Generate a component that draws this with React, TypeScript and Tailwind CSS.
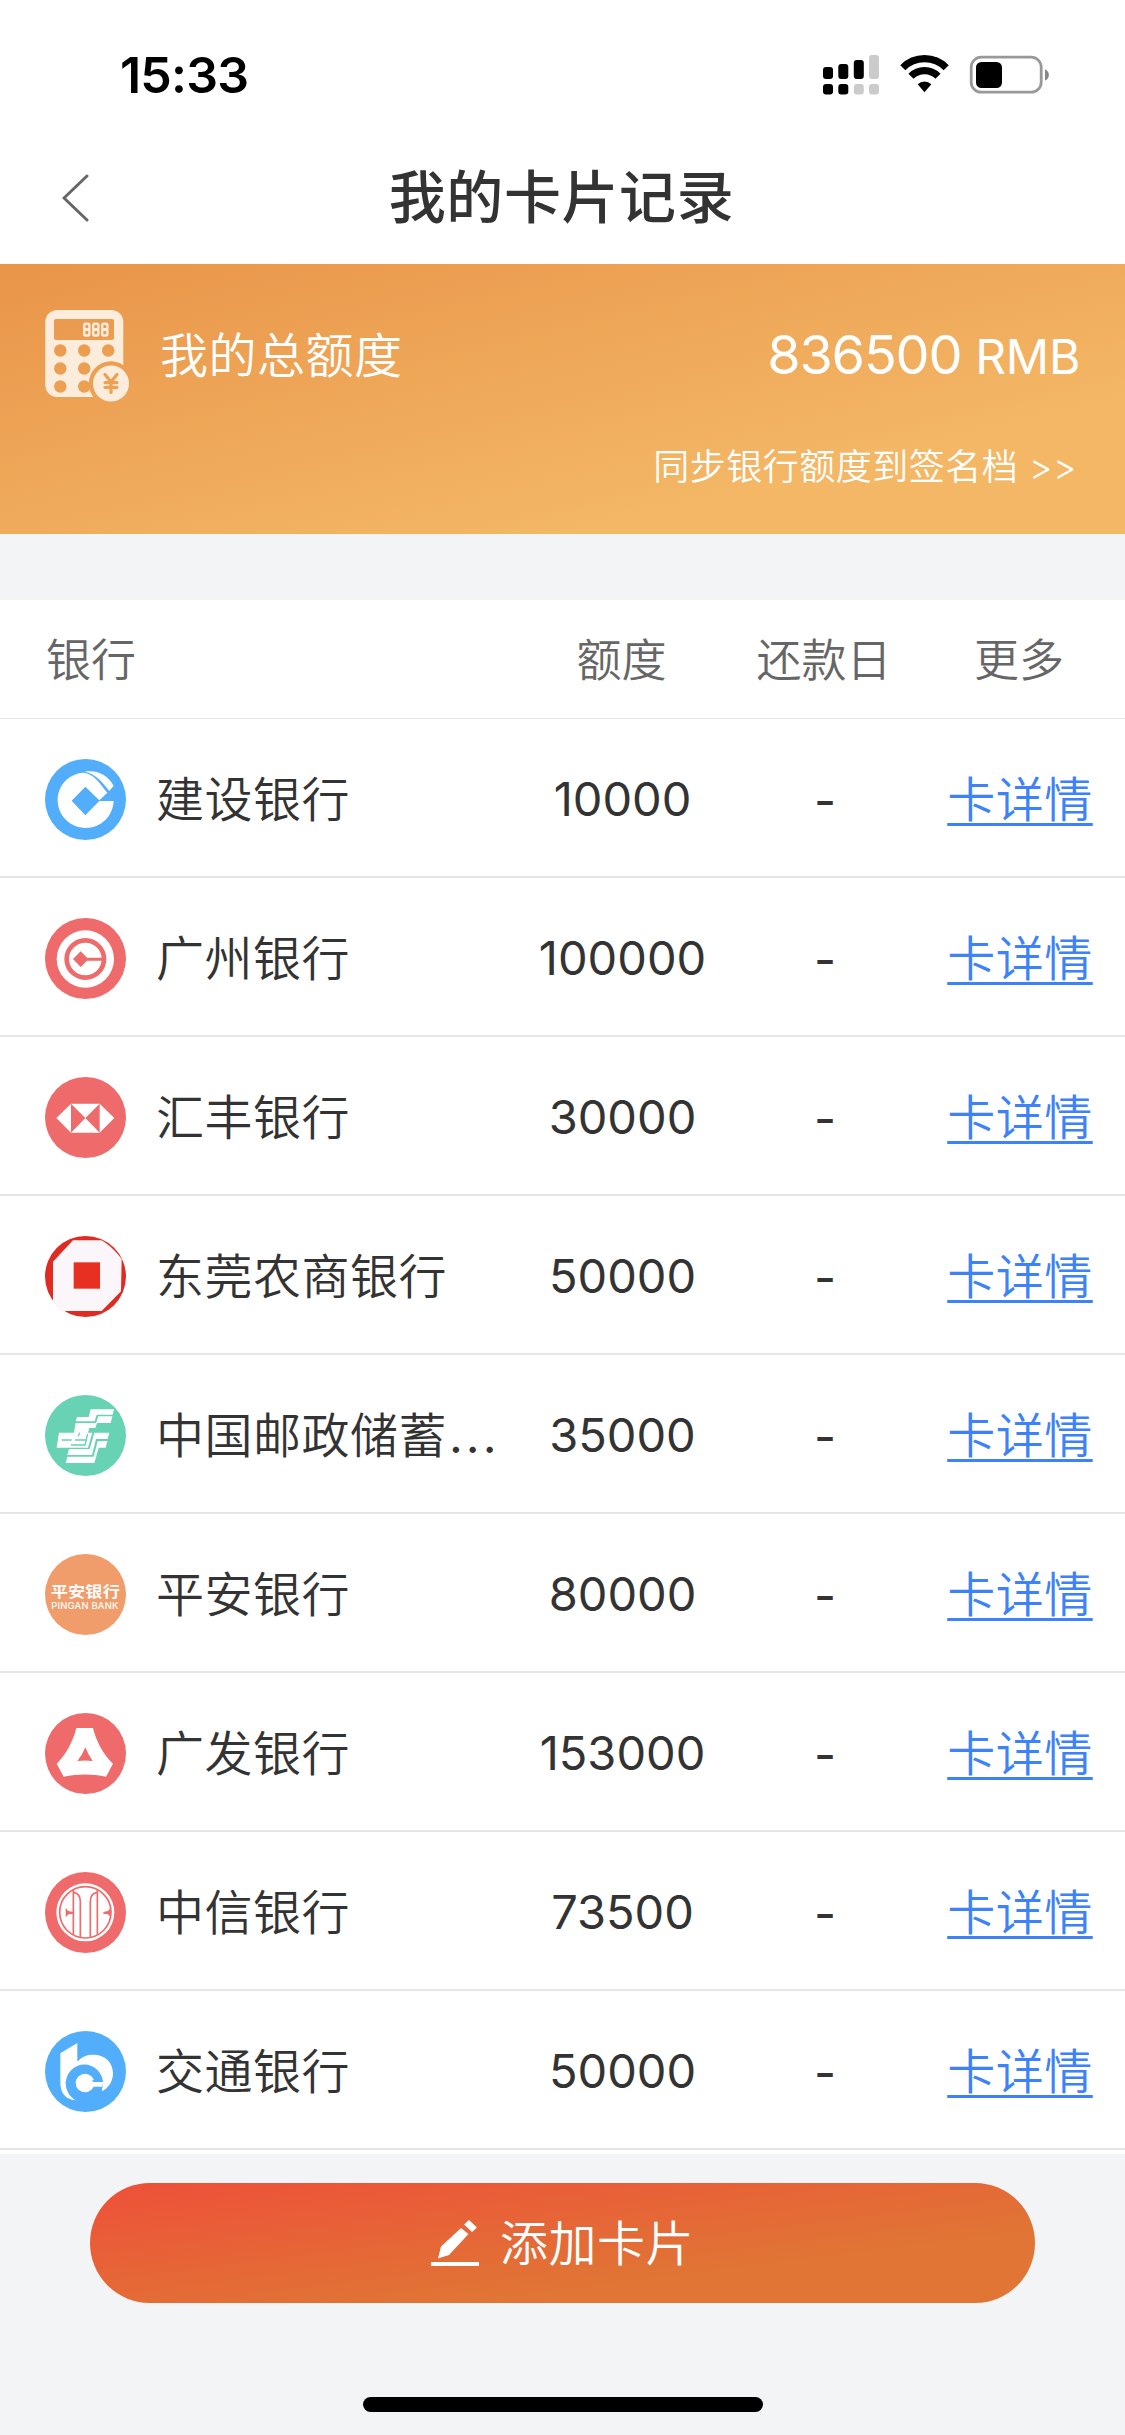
import type { ReactNode } from "react";

const WHITE = "#ffffff";
const RED = "#ee6a6b";
const BLUE = "#52adfb";

function Logo({ color, children }: { color: string; children: ReactNode }) {
  return (
    <svg viewBox="0 0 243 243" className="mt-[3px] size-[81px] shrink-0">
      <circle cx="121.5" cy="121.5" r="121.5" fill={color} />
      {children}
    </svg>
  );
}

function ConstructionBank() {
  return (
    <Logo color={BLUE}>
      <path
        fill={WHITE}
        d="M115 41C70 44 38 80 38 124C38 170 76 207 122 207C168 207 204 171 206 126H163L121 169L80 125L121 83L163 124L187 101C170 82 150 44 115 41Z"
      />
      <path fill={WHITE} d="M119 38C155 33 187 46 206 80L193 96C176 74 152 43 119 38Z" />
    </Logo>
  );
}

function GuangzhouBank() {
  return (
    <Logo color={RED}>
      <circle cx="121" cy="123" r="86" fill={WHITE} />
      <circle cx="121" cy="123" r="56" fill="none" stroke={RED} strokeWidth="14" />
      <path fill={RED} d="M84 123L107 100L126 119H172V128H126L107 147Z" />
    </Logo>
  );
}

function Hsbc() {
  return (
    <Logo color={RED}>
      <path fill={WHITE} d="M34 123L78 80H164L208 123L164 167H78Z" />
      <path fill={RED} d="M78 80L121 123L78 167ZM164 80L121 123L164 167Z" />
    </Logo>
  );
}

function DongguanBank() {
  return (
    <svg viewBox="0 0 243 243" className="mt-[3px] size-[81px] shrink-0">
      <clipPath id="dg">
        <circle cx="121.5" cy="121.5" r="121.5" />
      </clipPath>
      <g clipPath="url(#dg)">
        <rect width="243" height="243" fill="#df2b22" />
        <path fill="#faf6f9" d="M84 13H169C190 24 214 46 230 70L228 166L170 225H56L0 243L24 192V77Z" />
        <path fill={WHITE} d="M24 192L60 225V243H0V192Z" />
        <rect x="86" y="79" width="79" height="79" fill="#e83022" />
      </g>
    </svg>
  );
}

function PostalBank() {
  return (
    <Logo color="#68d2b4">
      <g fill={WHITE}>
        <path d="M137 43H207L203 59H155L149 79H92L96 66H131Z" />
        <path d="M160 64H202L197 84H156L151 99H133L128 117H86L92 84H153Z" />
        <path d="M42 113H142L129 158H35Z" />
        <path d="M148 113H193L188 132H153L141 180H67L72 162H134Z" />
        <path d="M158 138H187L182 158H161L148 204H62L67 185H146Z" />
      </g>
      <path
        d="M50 135H80M90 135H126M128 117L120 150H78M104 113L100 124"
        fill="none"
        stroke="#68d2b4"
        strokeWidth="4"
      />
    </Logo>
  );
}

function PingAnBank() {
  return (
    <Logo color="#f09c6b">
      <text
        x="121"
        y="130"
        fill={WHITE}
        fontSize="44"
        fontWeight="700"
        textAnchor="middle"
        textLength="208"
        lengthAdjust="spacingAndGlyphs"
        fontFamily="'Noto Sans CJK SC', sans-serif"
      >
        平安银行
      </text>
      <text
        x="120"
        y="164"
        fill={WHITE}
        fontSize="26"
        fontWeight="500"
        textAnchor="middle"
        textLength="202"
        lengthAdjust="spacingAndGlyphs"
        fontFamily="Inter, sans-serif"
      >
        PINGAN BANK
      </text>
    </Logo>
  );
}

function GuangfaBank() {
  return (
    <Logo color={RED}>
      <path
        fill={WHITE}
        d="M94 45H144C154 84 174 124 204 152L183 191C142 182 100 182 56 191L35 152C64 124 84 84 94 45Z"
      />
      <path fill={RED} d="M121 103Q129 124 143 144Q121 141 97 144Q112 126 121 103Z" />
    </Logo>
  );
}

function CiticBank() {
  return (
    <Logo color={RED}>
      <circle cx="121" cy="121" r="87" fill={WHITE} />
      <circle cx="121" cy="121" r="77" fill="none" stroke={RED} strokeWidth="5" />
      <g fill="none" stroke={RED} strokeWidth="5">
        <path d="M85 54V188M157 54V188" />
        <path d="M85 61C99 63 106 72 106 88V196M157 61C143 63 136 72 136 88V196" />
      </g>
      <path fill={RED} d="M62 108L70 117L85 120V125L70 127L62 136ZM197 108L189 117L175 120V125L189 127L197 136Z" />
    </Logo>
  );
}

function CommunicationsBank() {
  return (
    <Logo color={BLUE}>
      <path
        fill={WHITE}
        d="M46 67L97 36V92C110 76 127 71 146 71C180 71 204 95 204 127C204 151 190 172 171 181L172 140L118 110L62 150C62 180 75 198 92 208C60 204 46 185 46 155Z"
      />
      <circle cx="118" cy="156" r="55.5" fill={BLUE} />
      <circle cx="120" cy="156" r="28" fill={WHITE} />
      <path fill={WHITE} d="M130 153H175L171 167H130Z" />
      <path fill={BLUE} d="M140 148H171L175 153H145Z" />
    </Logo>
  );
}

function CalculatorIcon() {
  return (
    <svg viewBox="0 0 84 92" className="h-[92px] w-[84px] shrink-0">
      <mask id="calc">
        <rect x="0.3" width="78" height="87" rx="12" fill="white" />
        <rect x="9" y="9" width="60" height="21" rx="2" fill="black" />
        {[40.5, 58.5, 76.5].map((y) =>
          [15.3, 39.2, 63.2].map((x) => <circle key={`${x}-${y}`} cx={x} cy={y} r="6.2" fill="black" />),
        )}
        <circle cx="66" cy="73.5" r="22.2" fill="black" />
        <circle cx="66" cy="73.5" r="18" fill="white" />
        <path
          d="M60 64.5L66 72L72 64.5M66 72V82.5M60 72.6H72M60 77.3H72"
          fill="none"
          stroke="black"
          strokeWidth="3.2"
          strokeLinecap="round"
        />
      </mask>
      <rect width="84" height="92" fill="#fbecdc" mask="url(#calc)" />
      <g fill="none" stroke="#fbecdc" strokeWidth="2.4">
        {[39.2, 48.2, 57.2].map((x) => (
          <g key={x}>
            <rect x={x} y="13.7" width="5.2" height="5.8" rx="1.5" />
            <rect x={x} y="19.5" width="5.2" height="6" rx="1.5" />
          </g>
        ))}
      </g>
    </svg>
  );
}

function StatusIcons() {
  return (
    <svg viewBox="0 0 230 42" className="h-[42px] w-[230px]">
      <g>
        <rect x="3" y="14" width="10" height="12" rx="3" />
        <rect x="18.3" y="11" width="10" height="15" rx="3" />
        <rect x="33.8" y="7" width="10" height="19" rx="3" />
        <rect x="49" y="2" width="10" height="24" rx="3" fill="#cbcbcb" />
        <rect x="3" y="31" width="10" height="10.5" rx="3" />
        <rect x="18.3" y="31" width="10" height="10.5" rx="3" />
        <rect x="33.8" y="31" width="10" height="10.5" rx="3" fill="#cbcbcb" />
        <rect x="49" y="31" width="10" height="10.5" rx="3" fill="#cbcbcb" />
      </g>
      <g fill="none" stroke="#000" strokeWidth="7.2">
        <path d="M82.8 14.7A30.5 30.5 0 0 1 126.2 14.7" />
        <path d="M91 23.3A19 19 0 0 1 118 23.3" />
      </g>
      <path d="M97.7 31.2A10 10 0 0 1 111.300 31.2L104.5 39.2Z" />
      <rect x="151.200" y="4.200" width="70" height="35" rx="10" fill="none" stroke="#999" strokeWidth="2.800" />
      <rect x="156" y="9" width="26" height="26" rx="5.500" />
      <path d="M225 16.500C230.200 18 230.200 26 225 27.500Z" fill="#888" />
    </svg>
  );
}

const GRID = "grid grid-cols-[530px_183px_222px_170px] pr-5";

const cards: { logo: ReactNode; name: string; cut?: boolean; amount: string }[] = [
  { logo: <ConstructionBank />, name: "建设银行", amount: "10000" },
  { logo: <GuangzhouBank />, name: "广州银行", amount: "100000" },
  { logo: <Hsbc />, name: "汇丰银行", amount: "30000" },
  { logo: <DongguanBank />, name: "东莞农商银行", amount: "50000" },
  { logo: <PostalBank />, name: "中国邮政储蓄", cut: true, amount: "35000" },
  { logo: <PingAnBank />, name: "平安银行", amount: "80000" },
  { logo: <GuangfaBank />, name: "广发银行", amount: "153000" },
  { logo: <CiticBank />, name: "中信银行", amount: "73500" },
  { logo: <CommunicationsBank />, name: "交通银行", amount: "50000" },
];

export default function App() {
  return (
    <div className="flex h-[2435px] w-[1125px] flex-col overflow-hidden bg-[#f3f4f6] font-['Inter','Noto_Sans_CJK_SC',sans-serif] text-[#333]">
      <header className="h-[264px] shrink-0 bg-white">
        <div className="flex h-[132px] items-start justify-between pt-[53px] pr-[75px] pl-[120px]">
          <span className="-mt-px text-[50px] leading-[46px] font-semibold tracking-[-0.8px] text-black">15:33</span>
          <StatusIcons />
        </div>
        <div className="grid h-[132px] grid-cols-[1fr_auto_1fr] items-center">
          <svg viewBox="0 0 28 48" className="ml-[61px] h-12 w-7">
            <path d="M26 2L3 24L26 46" fill="none" stroke="#666" strokeWidth="3" strokeLinejoin="round" strokeLinecap="round" />
          </svg>
          <h1 className="-ml-0.5 text-[57px] leading-[80px] font-medium tracking-[0.6px]">我的卡片记录</h1>
        </div>
      </header>

      <section className="h-[270px] shrink-0 bg-[linear-gradient(to_bottom_right,#e99449,#f3b765_75%)] px-[45px] pt-[45px] text-white">
        <div className="flex h-[94px] items-center">
          <CalculatorIcon />
          <span className="ml-[31px] text-[48px] leading-[60px] font-[350] tracking-[0.5px]">我的总额度</span>
          <span className="ml-auto text-[54px] leading-[60px] tracking-[-1.2px]">
            836500 <span className="text-[48px] tracking-[-0.3px]">RMB</span>
          </span>
        </div>
        <div className="mt-10 pr-[3px] text-right text-[36px] leading-[48px] font-[350] tracking-[0.5px]">
          同步银行额度到签名档 &gt;&gt;
        </div>
      </section>

      <section className="mt-[66px] h-[1554px] shrink-0 bg-white">
        <div className={`${GRID} h-[119px] items-center border-b border-[#e5e5e5] pt-1 text-center text-[45px] font-[350] text-[#666]`}>
          <span className="pl-[46px] text-left">银行</span>
          <span>额度</span>
          <span>还款日</span>
          <span className="-ml-0.5">更多</span>
        </div>
        {cards.map((card) => (
          <div key={card.name} className={`${GRID} h-[159px] items-center border-b-2 border-[#e6e6e6] text-center text-[48px]`}>
            <div className="flex items-center gap-[30px] pl-[45px] tracking-[0.5px]">
              {card.logo}
              <span className="pt-1 font-[350] whitespace-nowrap">
                {card.name}
                {card.cut && <span className="pl-0.5 font-normal tracking-[3px]">...</span>}
              </span>
            </div>
            <span className="pt-1 pl-0.5 text-[47px]">{card.amount}</span>
            <span className="pt-1.5 pl-0.5">-</span>
            <a className="pt-1 font-[350] tracking-[0.5px] text-[#3d82f8] underline decoration-[3px] underline-offset-[6px]">卡详情</a>
          </div>
        ))}
      </section>

      <button className="mx-[90px] mt-[29px] flex h-[120px] shrink-0 items-center justify-center gap-[21px] rounded-full bg-[linear-gradient(to_bottom_right,#ee5039,#e07535_70%)] text-[48px] font-[350] tracking-[0.5px] text-white">
        <svg viewBox="0 0 48 48" className="size-12" fill="currentColor">
          <rect y="43" width="48" height="4" />
          <path d="M30 9L37.500 15L18 36L7 39.500L10 27.500ZM33 5.500L38 1L46 8.500L41 13Z" />
        </svg>
        <span className="pt-0.5">添加卡片</span>
      </button>
      <div className="mx-auto mt-[94px] h-[15px] w-[400px] shrink-0 rounded-full bg-black" />
    </div>
  );
}
